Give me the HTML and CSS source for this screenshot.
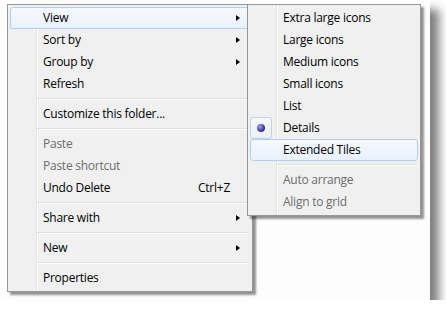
FILE: index.html
```html
<!DOCTYPE html>
<html lang="en">
<head>
<meta charset="UTF-8">
<title>View menu</title>
<link rel="stylesheet" href="styles.css">
</head>
<body>
<div class="desktop">
  <div class="menu main-menu">
    <div class="item hot"><span class="label">View</span><span class="arrow"></span></div>
    <div class="item"><span class="label">Sort by</span><span class="arrow"></span></div>
    <div class="item"><span class="label">Group by</span><span class="arrow"></span></div>
    <div class="item"><span class="label">Refresh</span></div>
    <div class="sep"></div>
    <div class="item"><span class="label">Customize this folder...</span></div>
    <div class="sep"></div>
    <div class="item off"><span class="label">Paste</span></div>
    <div class="item off"><span class="label">Paste shortcut</span></div>
    <div class="item"><span class="label">Undo Delete</span><span class="key">Ctrl+Z</span></div>
    <div class="sep"></div>
    <div class="item"><span class="label">Share with</span><span class="arrow"></span></div>
    <div class="sep"></div>
    <div class="item"><span class="label">New</span><span class="arrow"></span></div>
    <div class="sep"></div>
    <div class="item"><span class="label">Properties</span></div>
  </div>

  <div class="menu sub-menu">
    <div class="item"><span class="label">Extra large icons</span></div>
    <div class="item"><span class="label">Large icons</span></div>
    <div class="item"><span class="label">Medium icons</span></div>
    <div class="item"><span class="label">Small icons</span></div>
    <div class="item"><span class="label">List</span></div>
    <div class="item checked"><span class="check"><span class="bullet"></span></span><span class="label">Details</span></div>
    <div class="item hot"><span class="label">Extended Tiles</span></div>
    <div class="sep"></div>
    <div class="item off"><span class="label">Auto arrange</span></div>
    <div class="item off"><span class="label">Align to grid</span></div>
  </div>
</div>
</body>
</html>
```

FILE: styles.css
```css
* {
  margin: 0;
  padding: 0;
  box-sizing: border-box;
}
body {
  background: #fff;
  font-family: "Open Sans", "Noto Sans", sans-serif;
  font-size: 12px;
  letter-spacing: -0.25px;
  color: #000;
}
.desktop {
  position: relative;
  width: 430px;
  height: 300px;
  background: #fdfdfd;
  box-shadow: 9px 9px 9px rgba(0, 0, 0, .5);
}
.menu {
  position: absolute;
  top: 4px;
  padding: 2px;
  border: 1px solid #979797;
  background-color: #f0f0f0;
  background-image: linear-gradient(to right, transparent 28px, #e2e3e3 28px, #e2e3e3 29px, #fff 29px, #fff 30px, transparent 30px);
  box-shadow: 3px 3px 2px rgba(0, 0, 0, .42);
}
.main-menu {
  left: 7px;
  width: 246px;
}
.sub-menu {
  left: 247px;
  width: 174px;
}
.item {
  position: relative;
  display: flex;
  align-items: center;
  height: 22px;
  padding: 0 9px 0 32px;
  border: 1px solid transparent;
  border-radius: 3px;
  line-height: 20px;
  white-space: nowrap;
}
.item .label {
  flex: 1;
}
.item.off {
  color: #6d6d6d;
}
.item.hot {
  border-color: #aecff7;
  background: linear-gradient(#f6f9fe, #e9f1fc);
}
.key {
  margin-right: 10px;
}
.arrow {
  width: 0;
  height: 0;
  border-left: 4px solid #000;
  border-top: 3.5px solid transparent;
  border-bottom: 3.5px solid transparent;
}
.sep {
  height: 8px;
  margin: 0 1px 0 27px;
  background: linear-gradient(transparent 3px, #e0e0e0 3px, #e0e0e0 4px, #fff 4px, #fff 5px, transparent 5px);
}
.check {
  position: absolute;
  left: -1px;
  top: -1px;
  width: 22px;
  height: 22px;
  border: 1px solid #c3d3e8;
  border-radius: 3px;
  background: linear-gradient(#f5f8fc, #ebf1f9);
  display: flex;
  align-items: center;
  justify-content: center;
}
.bullet {
  width: 8px;
  height: 8px;
  border-radius: 50%;
  background: radial-gradient(circle at 35% 35%, #a0a0e6, #3c3c9e 60%, #22226c);
}
```
